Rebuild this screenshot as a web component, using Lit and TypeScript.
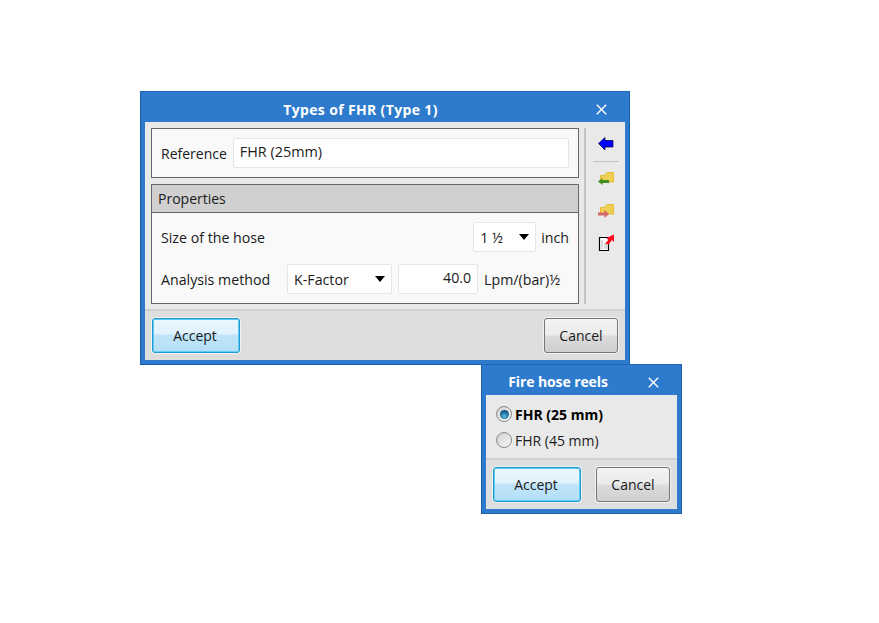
import { LitElement, html, css } from "lit";
import { customElement } from "lit/decorators.js";

@customElement("app-root")
export class AppRoot extends LitElement {
  static styles = css`
    :host { display: block; position: relative; width: 879px; height: 623px; background: #fff; overflow: hidden;
      font-family: "Open Sans", "Noto Sans", sans-serif; font-size: 14px; color: #1a1a1a; }
    * { box-sizing: border-box; }
    .win { position: absolute; background: #2e7bcd; border: 1px solid #1a5ea8; border-top-color:#1f67b5; display: flex; flex-direction: column; padding: 0 4px 4px; }
    .w1 { left: 140px; top: 91px; width: 490px; height: 274px; }
    .w2 { left: 481px; top: 364px; width: 201px; height: 150px; }
    .title { height: 30px; flex: none; display: flex; align-items: center; justify-content: center; position: relative; color: #fff; font-weight: 700; font-size: 14px; padding-top: 4px; }
    .w1 .title { padding-right: 49px; letter-spacing: 0.35px; }
    .w2 .title { padding-right: 47px; padding-top: 3px; letter-spacing: -0.1px; }
    .x { position: absolute; top: 12px; width: 11px; height: 11px; }
    .w1 .x { right: 18px; }
    .w2 .x { right: 18px; }
    .client { flex: 1; background: #e9e9e9; display: flex; flex-direction: column; min-height: 0; }
    .top { height: 187px; flex: none; display: flex; padding: 6px 0 0 6px; }
    .panels { width: 428px; display: flex; flex-direction: column; gap: 6px; }
    .panel { border: 1px solid #666; background: #f9f9f9; }
    .ref { height: 50px; display: flex; align-items: center; padding: 0 9px; gap: 6px; }
    .input { background: #fff; border: 1px solid #e2e5ea; border-radius: 2px; height: 30px; display: flex; align-items: center; padding: 0 6px; }
    .ref .input { width: 336px; padding-bottom: 3px; font-size: 14.4px; }
    .props { height: 120px; }
    .head { height: 28px; background: #d0d0d0; border-bottom: 1px solid #666; padding: 0 6px; display: flex; align-items: center; }
    .body { display: flex; flex-direction: column; padding: 9px 9px 0; gap: 12px; font-size: 14.2px; }
    .row { height: 30px; display: flex; align-items: center; gap: 6px; }
    .spacer { flex: 1; }
    .sel { justify-content: space-between; }
    .sel::after { content: ""; border: 5px solid transparent; border-top: 6px solid #000; border-bottom: 0; }
    .s1 { width: 63px; margin-right: -1px; }
    .s2 { width: 105px; margin-left: 11px; }
    .num { width: 80px; justify-content: flex-end; padding-bottom: 3px; }
    .tools { width: 40px; margin-left: 5px; border-left: 2px solid #c4c4c4; height: 176px; display: flex; flex-direction: column; align-items: center; padding: 7px 0 0 2px; }
    .tools svg { display: block; }
    .sep { width: 26px; height: 1px; background: #c4c4c4; margin: 8px 0; }
    .tool { height: 18px; width: 18px; margin-bottom: 14px; }
    .foot { flex: 1; background: #dedede; border-top: 2px solid #d0d0d0; display: flex; justify-content: space-between; padding: 7px 7px 0; }
    .btn { height: 35px; border-radius: 3px; display: flex; align-items: center; justify-content: center; box-shadow: 0 0 0 1px #f2f2f2; padding-bottom: 1px; }
    .ok { width: 88px; border: 1px solid #1f9ad2; background: linear-gradient(#ebf7fe 0, #dff2fd 45%, #bfe4f9 50%, #b5e0f8 100%); box-shadow: 0 0 0 1px #f2f2f2, inset 0 0 0 1px #5fcdf2; padding-right: 2px; }
    .cancel { width: 74px; border: 1px solid #777; background: linear-gradient(#f3f3f3 0, #ebebeb 48%, #dcdcdc 52%, #cfcfcf 100%); }
    .radios { height: 63px; flex: none; padding: 9px 9px 0; display: flex; flex-direction: column; gap: 6px; }
    .opt { display: flex; align-items: center; gap: 3px; height: 20px; padding-left: 1px; }
    .b { font-weight: 700; color: #000; }
    .radio { width: 16px; height: 16px; border-radius: 50%; border: 1px solid #8a8a8a; background: linear-gradient(135deg, #cfcfcf, #f8f8f8); display: flex; align-items: center; justify-content: center; }
    .radio.on::after { content: ""; width: 9px; height: 9px; border-radius: 50%; background: radial-gradient(circle at 50% 70%, #58bde4, #0c5480 70%); }
  `;

  private close() {
    return html`<svg class="x" viewBox="0 0 11 11"><path d="M.8.8l9.4 9.4M10.2.8L.8 10.200" stroke="#fff" stroke-width="1.4" fill="none"/></svg>`;
  }

  render() {
    return html`
      <div class="win w1">
        <div class="title">Types of FHR (Type 1)${this.close()}</div>
        <div class="client">
          <div class="top">
            <div class="panels">
              <div class="panel ref"><span>Reference</span><div class="input">FHR (25mm)</div></div>
              <div class="panel props">
                <div class="head">Properties</div>
                <div class="body">
                  <div class="row"><span>Size of the hose</span><span class="spacer"></span><div class="input sel s1">1 ½</div><span>inch</span></div>
                  <div class="row"><span>Analysis method</span><div class="input sel s2">K-Factor</div><div class="input num">40.0</div><span>Lpm/(bar)½</span></div>
                </div>
              </div>
            </div>
            <div class="tools">
              <svg class="tool" viewBox="0 0 18 18" style="margin-bottom:0"><path d="M1.500 8.500L8 2.500V5.500h8V12H8v3z" fill="#0000ff" stroke="#000040" stroke-width=".7"/></svg>
              <div class="sep"></div>
              <svg class="tool" viewBox="0 0 18 18"><path d="M3.500 5.500h4l2.500-3h6.500v9.500h-13z" fill="#efd054" stroke="#e8bb2e"/><path d="M1 11.500l4.500-3.500v2h6.500v3H5.500v2z" fill="#3f8f1a"/></svg>
              <svg class="tool" viewBox="0 0 18 18"><path d="M3.500 5.500h4l2.500-3h6.500v9.500h-13z" fill="#efd054" stroke="#e8bb2e"/><path d="M12 12l-4.500 4v-2.500H1v-3h6.500V8z" fill="#d2686a"/></svg>
              <svg class="tool" viewBox="0 0 18 18"><path d="M2.500 3.500h9v13h-9z" fill="#fff" stroke="#000" stroke-width="1.200"/><path d="M4 6h2v9H4zM7 9h4v6H7z" fill="#d8d8d8"/><path d="M8 9.500l3.500-3.500-2-2L17 .5V8l-2-2-3.500 4.500z" fill="#ff0a1e"/></svg>
            </div>
          </div>
          <div class="foot"><div class="btn ok">Accept</div><div class="btn cancel">Cancel</div></div>
        </div>
      </div>
      <div class="win w2">
        <div class="title">Fire hose reels${this.close()}</div>
        <div class="client">
          <div class="radios">
            <div class="opt b"><span class="radio on"></span>FHR (25 mm)</div>
            <div class="opt"><span class="radio"></span>FHR (45 mm)</div>
          </div>
          <div class="foot"><div class="btn ok">Accept</div><div class="btn cancel">Cancel</div></div>
        </div>
      </div>
    `;
  }
}
